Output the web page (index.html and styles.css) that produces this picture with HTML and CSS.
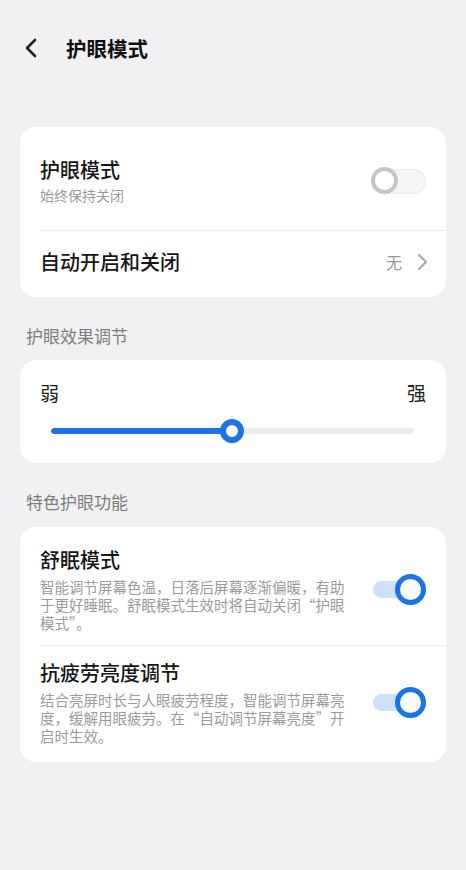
FILE: index.html
```html
<!DOCTYPE html>
<html lang="zh-CN">
<head>
<meta charset="utf-8">
<link rel="stylesheet" href="styles.css">
</head>
<body>
<div class="page">
  <header class="header">
    <svg class="back" width="16" height="20" viewBox="0 0 16 20"><path d="M12 2 L4 10 L12 18" fill="none" stroke="#222" stroke-width="2.6" stroke-linecap="round" stroke-linejoin="round"/></svg>
    <div class="header-title">护眼模式</div>
  </header>

  <section class="card">
    <div class="row row-first">
      <div class="text">
        <div class="title">护眼模式</div>
        <div class="sub">始终保持关闭</div>
      </div>
      <div class="switch-off"><span class="off-thumb"></span></div>
    </div>
    <div class="row row-link">
      <div class="title">自动开启和关闭</div>
      <div class="value">
        <span>无</span>
        <svg width="12" height="18" viewBox="0 0 12 18"><path d="M3 2 L10 9 L3 16" fill="none" stroke="#a8a8a8" stroke-width="2" stroke-linecap="round" stroke-linejoin="round"/></svg>
      </div>
    </div>
  </section>

  <div class="label">护眼效果调节</div>
  <section class="card slider-card">
    <div class="ends"><span>弱</span><span>强</span></div>
    <div class="slider">
      <div class="track">
        <div class="fill" style="width: 49.8%"></div>
      </div>
      <span class="knob" style="left: 49.8%"></span>
    </div>
  </section>

  <div class="label label2">特色护眼功能</div>
  <section class="card">
    <div class="row feat feat-first">
      <div class="text">
        <div class="title">舒眠模式</div>
        <div class="desc">智能调节屏幕色温，日落后屏幕逐渐偏暖，有助于更好睡眠。舒眠模式生效时将自动关闭“护眼模式”。</div>
      </div>
      <div class="switch-on"><span class="on-track"></span><span class="on-thumb"></span></div>
    </div>
    <div class="row feat feat-second">
      <div class="text">
        <div class="title">抗疲劳亮度调节</div>
        <div class="desc">结合亮屏时长与人眼疲劳程度，智能调节屏幕亮度，缓解用眼疲劳。在“自动调节屏幕亮度”开启时生效。</div>
      </div>
      <div class="switch-on"><span class="on-track"></span><span class="on-thumb"></span></div>
    </div>
  </section>
</div>
</body>
</html>
```
FILE: styles.css
```css
* { box-sizing: border-box; }
html, body {
  margin: 0;
  padding: 0;
  background: #f1f1f3;
  font-family: "Noto Sans CJK SC", "Noto Sans", sans-serif;
  color: #161616;
}
.page {
  padding: 20px 20px 0 20px;
}
.header {
  display: flex;
  align-items: center;
  height: 56px;
  padding-left: 3px;
}
.back { display: block; }
.header-title {
  margin-left: 27px;
  font-size: 20.5px;
  font-weight: 700;
  line-height: 28px;
  color: #111;
}
.card {
  background: #fff;
  border-radius: 16px;
  padding-left: 20px;
}
.header + .card { margin-top: 51px; }
.row {
  display: flex;
  align-items: center;
  justify-content: space-between;
  padding-right: 20px;
}
.title {
  font-size: 20px;
  line-height: 28px;
  font-weight: 500;
  color: #161616;
}
.sub {
  font-size: 14px;
  line-height: 20px;
  color: #9a9a9a;
  margin-top: 1px;
}
.row-first {
  padding-top: 29px;
  padding-bottom: 25px;
}
.row-link {
  height: 67px;
  padding-bottom: 4px;
  border-top: 1px solid #eeeeee;
}
.value {
  display: flex;
  align-items: center;
  gap: 14px;
  font-size: 16px;
  color: #9a9a9a;
  margin-right: -2px;
}
.value span { margin-left: -2px; }
.value svg { display: block; }

.switch-off {
  position: relative;
  width: 55px;
  height: 27px;
  flex: none;
}
.switch-off::before {
  content: "";
  position: absolute;
  left: 0;
  right: 0;
  top: 2px;
  height: 23px;
  border-radius: 12px;
  background: #f6f6f6;
  border: 1px solid #ececec;
}
.off-thumb {
  position: absolute;
  left: 0;
  top: 0;
  width: 27px;
  height: 27px;
  border-radius: 50%;
  border: 4px solid #c6c6c6;
  background: #fff;
}

.label {
  font-size: 17px;
  line-height: 22px;
  color: #7d7d7d;
  padding-left: 6px;
  margin-top: 28px;
  margin-bottom: 13px;
}
.label2 {
  margin-top: 28px;
  margin-bottom: 14px;
}

.slider-card {
  padding: 20px 20px 20px 20px;
}
.ends {
  display: flex;
  justify-content: space-between;
  font-size: 19px;
  line-height: 26px;
  color: #222;
}
.slider {
  position: relative;
  margin: 13px 12px 0 11px;
  height: 24px;
  display: flex;
  align-items: center;
}
.track {
  width: 100%;
  height: 6px;
  border-radius: 3px;
  background: #ededed;
  overflow: hidden;
}
.fill {
  height: 100%;
  background: #1a73e8;
  border-radius: 3px;
}
.knob {
  position: absolute;
  top: 0;
  width: 24px;
  height: 24px;
  margin-left: -12px;
  border-radius: 50%;
  border: 6px solid #1a73e8;
  background: #fff;
}

.feat .text { width: 312px; }
.desc {
  font-size: 14.5px;
  line-height: 18px;
  color: #9b9b9b;
  margin-top: 4px;
}
.feat-first {
  padding-top: 19px;
  padding-bottom: 13px;
}
.feat-second {
  border-top: 1px solid #eeeeee;
  padding-top: 13px;
  padding-bottom: 17px;
}
.switch-on {
  position: relative;
  width: 53px;
  height: 31px;
  flex: none;
}
.on-track {
  position: absolute;
  left: 0;
  top: 7px;
  width: 40px;
  height: 17px;
  border-radius: 9px;
  background: #cfe0fa;
}
.on-thumb {
  position: absolute;
  right: 0;
  top: 0;
  width: 31px;
  height: 31px;
  border-radius: 50%;
  border: 5px solid #1a73e8;
  background: #fdfdff;
}
```
